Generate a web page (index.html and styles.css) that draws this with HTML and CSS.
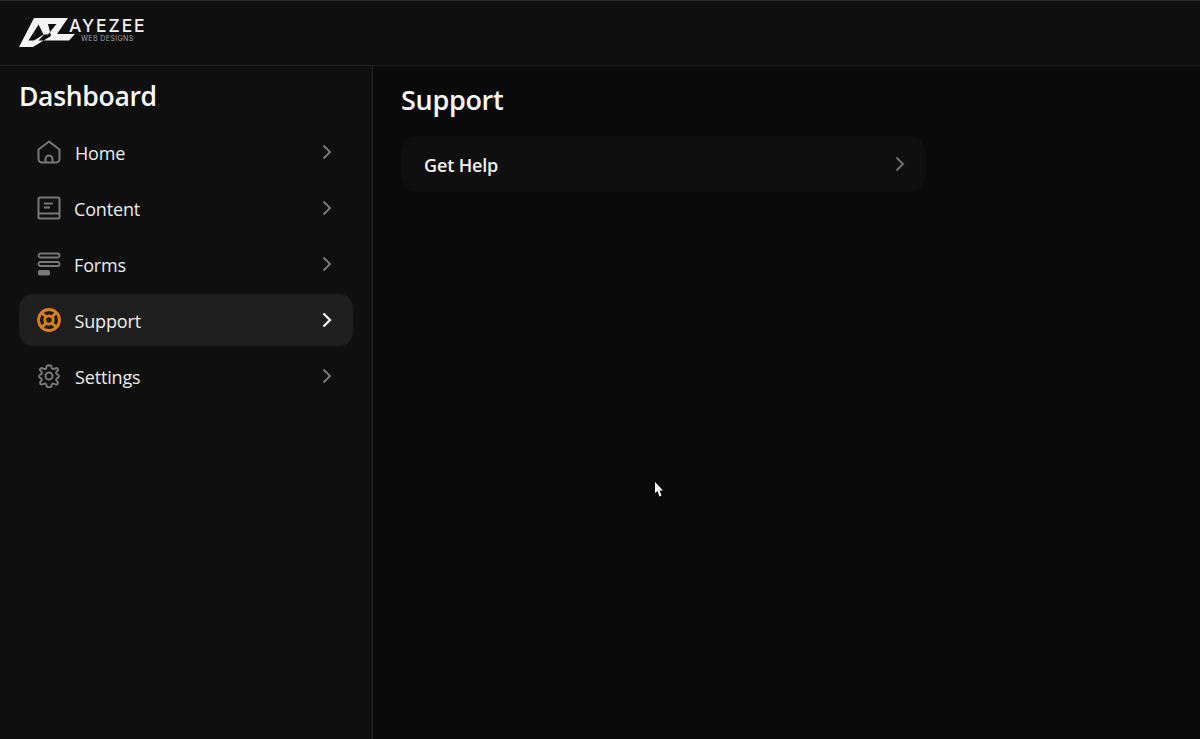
FILE: index.html
```html
<!DOCTYPE html>
<html lang="en">
<head>
<meta charset="utf-8">
<title>Support</title>
<link rel="stylesheet" href="styles.css">
</head>
<body>
<header class="topbar">
  <div class="logo">
    <svg class="logo-mark" width="58" height="32" viewBox="0 0 58 32"><path fill="#f4f4f4" fill-rule="evenodd" d="M15 2H49L38 18H56L50 24.500H19.500L25 18.500H29L37.500 8H29L32 20L23 25.500L14 31H0ZM19.500 8.500 9.500 24.500H15L24.500 18.500Z"/></svg>
    <div class="logo-text">
      <span class="logo-name">AYEZEE</span>
      <span class="logo-sub">WEB DESIGNS</span>
    </div>
  </div>
</header>
<div class="layout">
  <aside class="sidebar">
    <h1 class="side-title">Dashboard</h1>
    <nav class="nav">
      <a class="nav-item">
        <svg class="nav-icon" viewBox="0 0 24 24" fill="none" stroke="currentColor" stroke-width="2" stroke-linejoin="round"><path d="M1.500 9.500 12 1.500l10.500 8V19a3.500 3.500 0 0 1-3.500 3.500H5A3.500 3.500 0 0 1 1.500 19Z"/><path d="M8.500 22.500V19a3.500 3.500 0 0 1 7 0v3.500"/></svg>
        <span class="nav-label label-home">Home</span>
        <svg class="chev" viewBox="0 0 12 16" fill="none" stroke="currentColor" stroke-width="2"><path d="M2.500 1.500 9 8l-6.500 6.500"/></svg>
      </a>
      <a class="nav-item">
        <svg class="nav-icon" viewBox="0 0 24 24" fill="none" stroke="currentColor" stroke-width="2"><rect x="1.500" y="1.500" width="21" height="21" rx="1.500"/><path d="M1.500 17.500H22.500M7 7.500H16M7 11.500H13"/></svg>
        <span class="nav-label label-tight">Content</span>
        <svg class="chev" viewBox="0 0 12 16" fill="none" stroke="currentColor" stroke-width="2"><path d="M2.500 1.500 9 8l-6.500 6.500"/></svg>
      </a>
      <a class="nav-item">
        <svg class="nav-icon" viewBox="0 0 24 24" fill="none" stroke="currentColor" stroke-width="1.800"><rect x="1.500" y="1.500" width="21" height="4" rx="2"/><rect x="1.500" y="10" width="21" height="4" rx="2"/><rect x="1" y="18" width="12" height="5.500" rx="1.500" fill="currentColor" stroke="none"/></svg>
        <span class="nav-label label-tight">Forms</span>
        <svg class="chev" viewBox="0 0 12 16" fill="none" stroke="currentColor" stroke-width="2"><path d="M2.500 1.500 9 8l-6.500 6.500"/></svg>
      </a>
      <a class="nav-item active">
        <svg class="nav-icon" viewBox="0 0 24 24" fill="none" stroke="currentColor" stroke-width="2.800"><circle cx="12" cy="12" r="10.500"/><circle cx="12" cy="12" r="4.200"/><path d="M4.600 4.600 9 9M19.400 4.600 15 9M4.600 19.400 9 15M19.400 19.400 15 15"/></svg>
        <span class="nav-label label-active">Support</span>
        <svg class="chev" viewBox="0 0 12 16" fill="none" stroke="currentColor" stroke-width="2.300"><path d="M2.500 1.500 9 8l-6.500 6.500"/></svg>
      </a>
      <a class="nav-item">
        <svg class="nav-icon" viewBox="0 0 24 24" fill="none" stroke="currentColor" stroke-width="2" stroke-linejoin="round"><path d="M9.600 2.600a1.500 1.500 0 0 1 2.400-1 1.500 1.500 0 0 1 2.400 1l.3 1.300a1.500 1.500 0 0 0 2.100 1l1.300-.4a1.500 1.500 0 0 1 2.300 2.400l-.9 1a1.500 1.500 0 0 0 .5 2.300l1.100.8a1.500 1.500 0 0 1 0 2.600l-1.100.8a1.500 1.500 0 0 0-.5 2.300l.9 1a1.500 1.500 0 0 1-2.300 2.400l-1.300-.4a1.500 1.500 0 0 0-2.100 1l-.3 1.300a1.500 1.500 0 0 1-2.400 1 1.500 1.500 0 0 1-2.400-1l-.3-1.300a1.500 1.500 0 0 0-2.100-1l-1.300.4a1.500 1.500 0 0 1-2.300-2.400l.9-1a1.500 1.500 0 0 0-.5-2.300l-1.100-.8a1.500 1.500 0 0 1 0-2.600l1.100-.8a1.500 1.500 0 0 0 .5-2.300l-.9-1a1.500 1.500 0 0 1 2.300-2.400l1.300.4a1.500 1.500 0 0 0 2.100-1Z"/><circle cx="12" cy="12" r="3.500"/></svg>
        <span class="nav-label">Settings</span>
        <svg class="chev" viewBox="0 0 12 16" fill="none" stroke="currentColor" stroke-width="2"><path d="M2.500 1.500 9 8l-6.500 6.500"/></svg>
      </a>
    </nav>
  </aside>
  <main class="main">
    <h2 class="main-title">Support</h2>
    <a class="card">
      <span class="card-label">Get Help</span>
      <svg class="chev" viewBox="0 0 12 16" fill="none" stroke="currentColor" stroke-width="2"><path d="M2.500 1.500 9 8l-6.500 6.500"/></svg>
    </a>
  </main>
</div>
<svg class="cursor" width="10" height="16" viewBox="0 0 10 16"><path fill="#fff" d="M1 0V11L3.500 9L5.500 14.500L7.500 13.500L5.500 8.500H9Z"/></svg>
</body>
</html>
```
FILE: styles.css
```css
* { box-sizing: border-box; }
html, body { height: 100%; }
body {
  margin: 0;
  height: 739px;
  overflow: hidden;
  background: #0a0a0a;
  color: #f5f5f5;
  font-family: "Open Sans", "Noto Sans", sans-serif;
  display: flex;
  flex-direction: column;
  position: relative;
}
.topbar {
  height: 66px;
  flex: none;
  background: #0f0f0f;
  border-top: 1px solid #2a2a2a;
  border-bottom: 1px solid #222;
  padding: 15px 0 0 19px;
}
.logo { display: flex; align-items: flex-start; }
.logo-mark { display: block; margin-top: 0; flex: none; }
.logo-text { display: flex; flex-direction: column; margin-left: -8px; }
.logo-name {
  font-family: "Inter", sans-serif;
  font-size: 17.500px;
  line-height: 20px;
  font-weight: 500;
  color: #f2f2f2;
  letter-spacing: 1.900px;
  white-space: nowrap;
}
.logo-sub {
  font-family: "Inter", sans-serif;
  font-size: 7px;
  line-height: 7px;
  color: #a0a0a0;
  margin: -1px 0 0 12px;
  letter-spacing: 0.400px;
  white-space: nowrap;
}
.layout { display: flex; flex: 1; min-height: 0; }
.sidebar {
  width: 373px;
  flex: none;
  background: #0f0f0f;
  border-right: 1px solid #242424;
  padding: 12px 19px 0;
}
.side-title {
  margin: 0 0 12px;
  font-size: 26.500px;
  line-height: 36px;
  font-weight: 600;
  color: #fafafa;
  letter-spacing: -0.300px;
}
.nav { display: flex; flex-direction: column; gap: 4px; }
.nav-item {
  height: 52px;
  width: 334px;
  display: flex;
  align-items: center;
  padding: 0 18px;
  border-radius: 14px;
  color: #787878;
}
.nav-icon { width: 24px; height: 24px; flex: none; display: block; }
.nav-label {
  flex: 1;
  margin-left: 14px;
  font-size: 18px;
  line-height: 24px;
  color: #ececec;
  letter-spacing: -0.150px;
  padding-top: 2px;
}
.label-home { margin-left: 14px; }
.label-tight { margin-left: 13px; }
.label-active { margin-left: 13.500px; }
.chev { width: 12px; height: 16px; flex: none; display: block; margin-right: 2px; }
.nav-item.active { background: #1e1e1e; color: #d9801c; }
.nav-item.active .nav-label { color: #f0f0f0; }
.nav-item.active .chev { color: #f2f2f2; }
.main { flex: 1; padding: 15px 0 0 28px; }
.main-title {
  margin: 0 0 18px;
  font-size: 27px;
  line-height: 37px;
  font-weight: 600;
  color: #fafafa;
  letter-spacing: -0.300px;
}
.card {
  display: flex;
  align-items: center;
  width: 525px;
  height: 56px;
  padding: 0 18px 0 23px;
  background: #0f0f0f;
  border-radius: 16px;
  color: #6f6f6f;
}
.card-label {
  flex: 1;
  font-size: 18px;
  line-height: 24px;
  font-weight: 600;
  color: #f2f2f2;
  letter-spacing: -0.150px;
  padding-top: 1px;
}
.cursor { position: absolute; left: 654px; top: 482px; }
```
